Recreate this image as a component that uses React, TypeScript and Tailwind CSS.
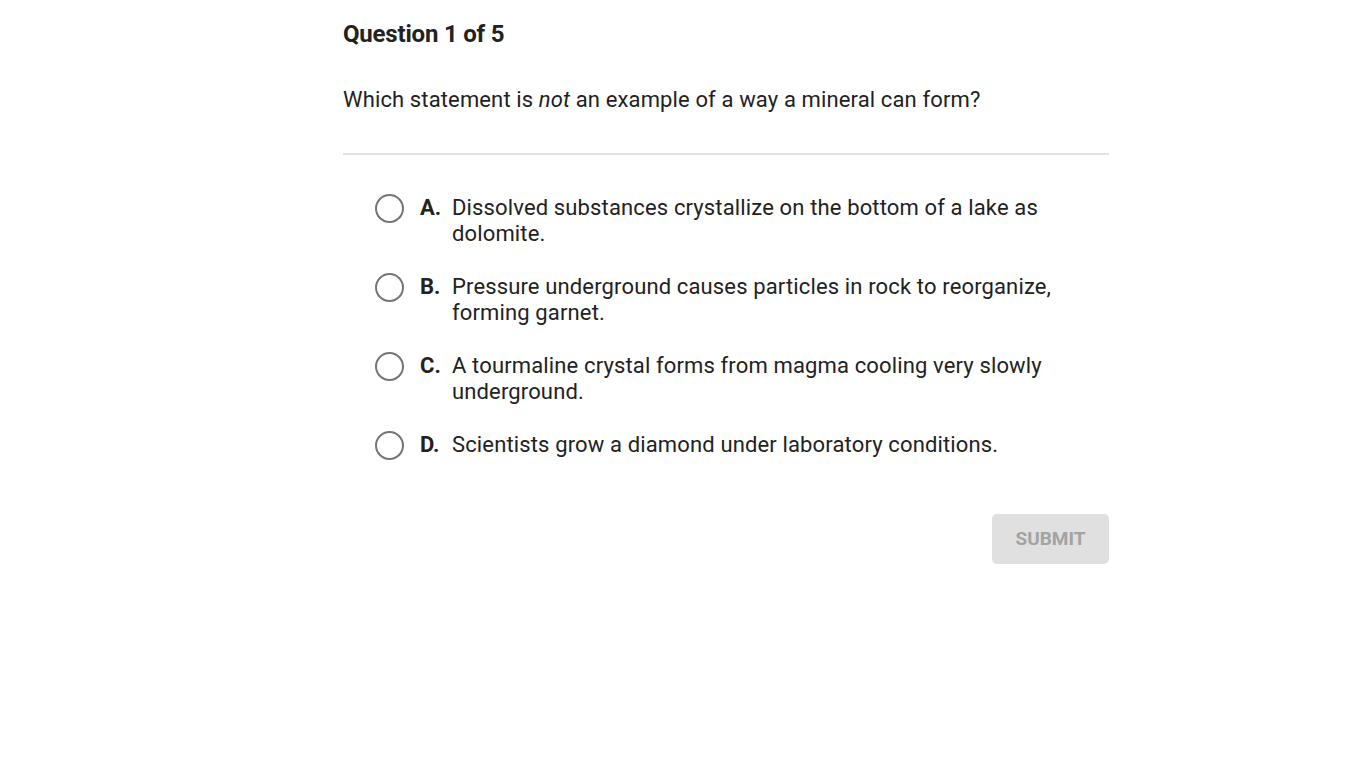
import * as React from "react"

const options = [
  { letter: "A.", text: "Dissolved substances crystallize on the bottom of a lake as dolomite." },
  { letter: "B.", text: "Pressure underground causes particles in rock to reorganize, forming garnet." },
  { letter: "C.", text: "A tourmaline crystal forms from magma cooling very slowly underground." },
  { letter: "D.", text: "Scientists grow a diamond under laboratory conditions." },
]

export default function App() {
  const [selected, setSelected] = React.useState<number | null>(null)

  return (
    <div className="min-h-screen bg-white text-[#222] font-['Roboto',sans-serif]">
      <div className="w-[766px] ml-[343px] pt-[19px]">
        <h1 className="text-[24px] font-bold leading-[30px] tracking-[-0.2px]">Question 1 of 5</h1>
        <p className="mt-[37px] text-[22px] leading-[28px] tracking-[0.13px]">
          Which statement is <em>not</em> an example of a way a mineral can form?
        </p>
        <div className="mt-[39px] border-t-2 border-[#e3e3e3]" />
        <ul className="mt-[40px] pl-[32px] pr-[32px] flex flex-col gap-[27px]">
          {options.map((o, i) => (
            <li key={o.letter} className="flex items-start cursor-pointer" onClick={() => setSelected(i)}>
              <span className="mt-[-1px] w-[29px] h-[29px] shrink-0 rounded-full border-2 border-[#757575] flex items-center justify-center">
                {selected === i && <span className="w-[15px] h-[15px] rounded-full bg-[#757575]" />}
              </span>
              <span className="ml-[16px] text-[22px] leading-[26px] font-bold w-[32px] shrink-0">{o.letter}</span>
              <span className="text-[22px] leading-[26px] tracking-[0.14px]">{o.text}</span>
            </li>
          ))}
        </ul>
        <div className="mt-[54px] flex justify-end">
          <button className="w-[117px] h-[50px] rounded-[5px] bg-[#e0e0e0] text-[#a3a3a3] text-[19px] font-bold">
            SUBMIT
          </button>
        </div>
      </div>
    </div>
  )
}
